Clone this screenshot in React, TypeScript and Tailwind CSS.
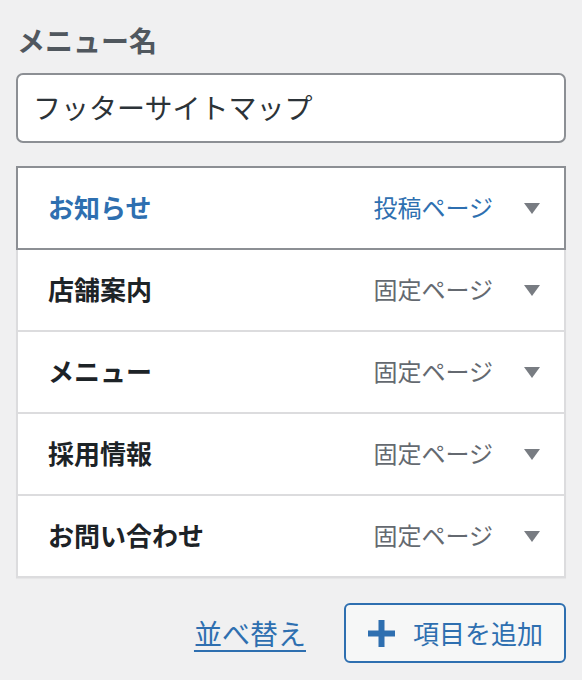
const items = [
  { title: "お知らせ", type: "投稿ページ", active: true },
  { title: "店舗案内", type: "固定ページ", active: false },
  { title: "メニュー", type: "固定ページ", active: false },
  { title: "採用情報", type: "固定ページ", active: false },
  { title: "お問い合わせ", type: "固定ページ", active: false },
];

function Caret() {
  return (
    <svg width="16" height="11" viewBox="0 0 16 11" className="shrink-0">
      <polygon points="0,0 16,0 8,11" fill="#787c82" />
    </svg>
  );
}

export default function App() {
  return (
    <div
      className="w-[582px] h-[680px] bg-[#f0f0f1] px-4 pt-[20px]"
      style={{ fontFamily: '"Noto Sans CJK JP", "Noto Sans", sans-serif' }}
    >
      <label className="block pl-[1px] text-[28px] leading-[40px] font-bold text-[#50575e]">メニュー名</label>

      <div className="mt-[13px] h-[70px] flex items-center bg-white border-2 border-[#8c8f94] rounded-[7px] px-[15px] pb-[2px] text-[28px] text-[#2c3338]">
        フッターサイトマップ
      </div>

      <ul className="mt-[23px] shadow-[0_1px_1px_rgba(0,0,0,0.04)]">
        {items.map((item) => (
          <li
            key={item.title}
            className={
              item.active
                ? "h-[84px] flex items-center bg-white border-2 border-[#8c8f94] pl-[30px] pr-[24px]"
                : "h-[82px] flex items-center bg-white border-x-2 border-b-2 border-[#dcdcde] pl-[30px] pr-[24px]"
            }
          >
            <span className={`flex-1 pb-[3px] text-[26px] font-bold ${item.active ? "text-[#2e6fb0]" : "text-[#1d2327]"}`}>
              {item.title}
            </span>
            <span className={`pb-[3px] text-[24px] mr-[31px] ${item.active ? "text-[#2e6fb0]" : "text-[#646970]"}`}>{item.type}</span>
            <Caret />
          </li>
        ))}
      </ul>

      <div className="mt-[25px] flex items-center justify-end gap-[38px]">
        <a href="#" className="text-[28px] text-[#2e6fb0] underline underline-offset-[5px] decoration-2">並べ替え</a>
        <button className="h-[60px] flex items-center gap-[18px] bg-[#f6f7f7] border-2 border-[#2e6fb0] rounded-[6px] pl-[22px] pr-[21px] pb-[2px] text-[26px] text-[#2e6fb0]">
          <svg width="27" height="27" viewBox="0 0 27 27" className="mt-[2px]">
            <rect x="10.5" y="0" width="6" height="27" fill="#2e6fb0" />
            <rect x="0" y="10.5" width="27" height="6" fill="#2e6fb0" />
          </svg>
          項目を追加
        </button>
      </div>
    </div>
  );
}
